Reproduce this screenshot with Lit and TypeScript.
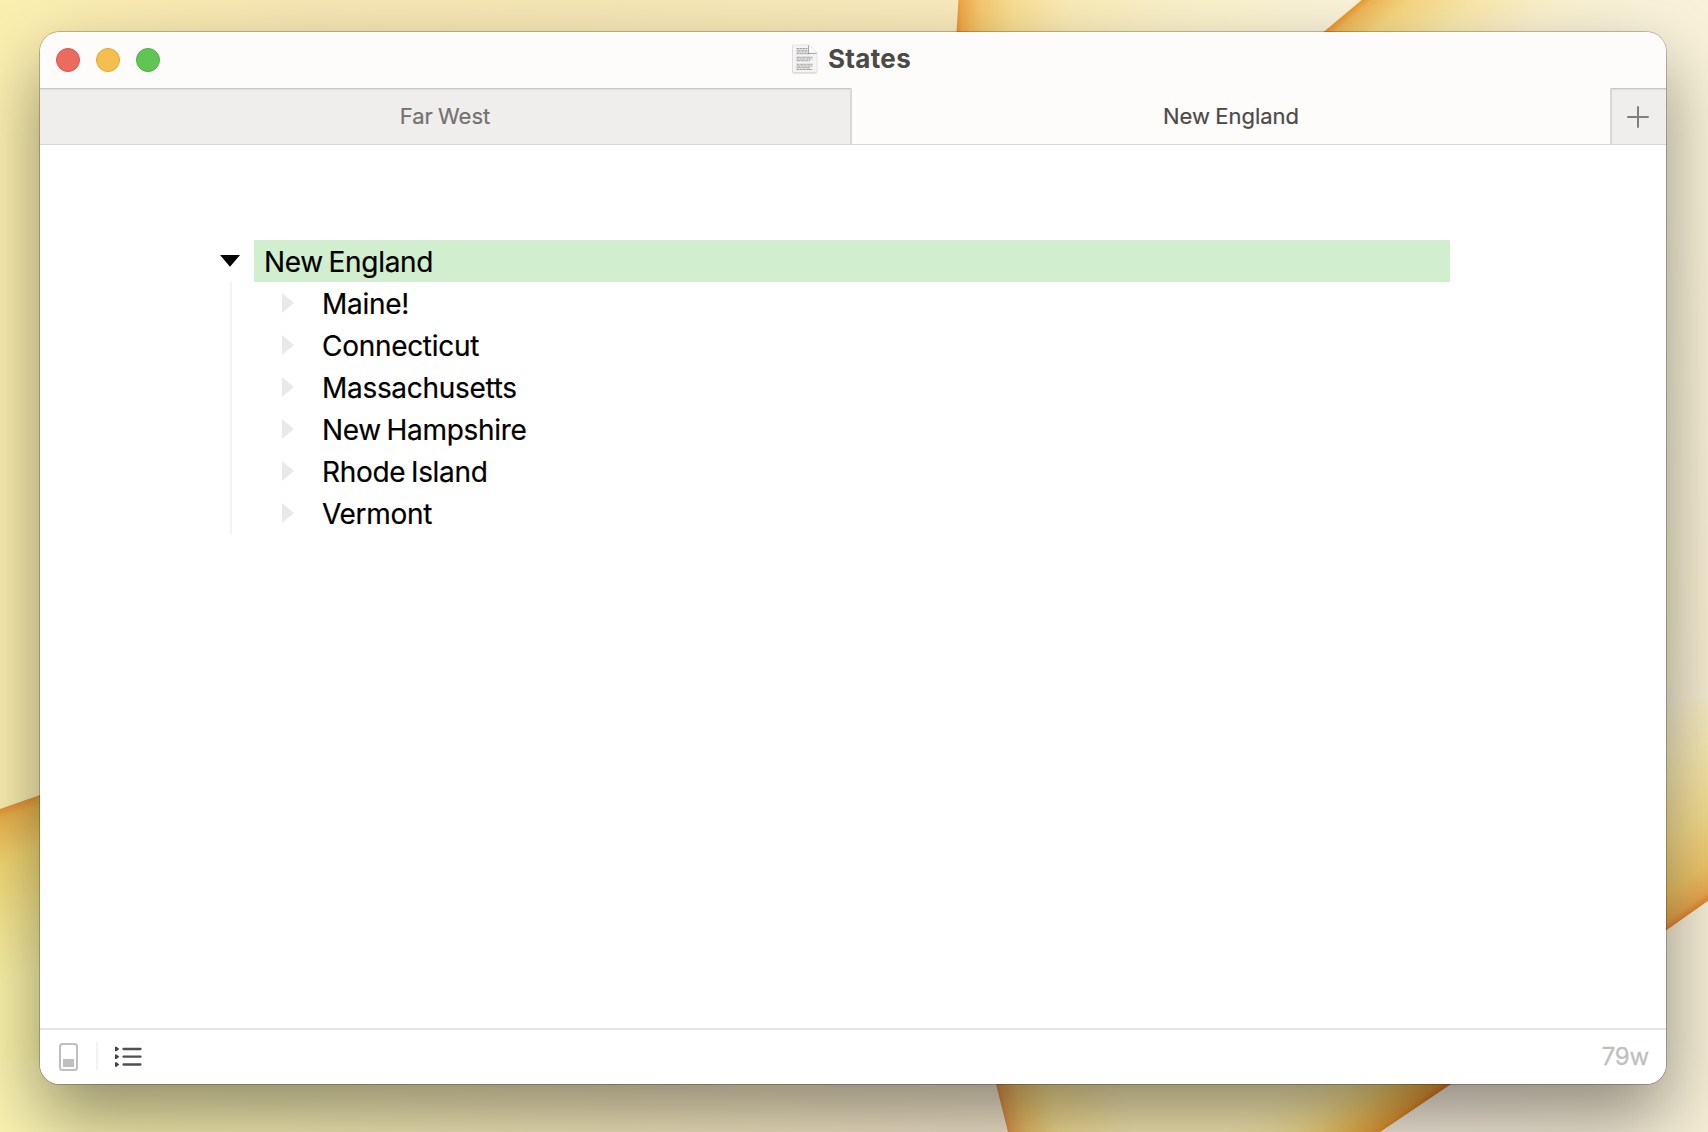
import { LitElement, html, css, svg } from "lit";
import { customElement } from "lit/decorators.js";

@customElement("desktop-wallpaper")
class DesktopWallpaper extends LitElement {
  static styles = css`
    :host { display: block; }
    svg { display: block; width: 1708px; height: 1132px; }
  `;
  render() {
    return html`<svg viewBox="0 0 1708 1132">
      <defs>
        <linearGradient id="base" gradientUnits="userSpaceOnUse" x1="0" y1="0" x2="960" y2="0">
          <stop offset="0" stop-color="#fbefb0" /><stop offset=".35" stop-color="#f7e6b5" />
          <stop offset=".7" stop-color="#f6e8b6" /><stop offset="1" stop-color="#f8eabc" />
        </linearGradient>
        <linearGradient id="topband" gradientUnits="userSpaceOnUse" x1="957" y1="0" x2="1360" y2="0">
          <stop offset="0" stop-color="#e8963c" /><stop offset=".012" stop-color="#efaa4b" />
          <stop offset=".06" stop-color="#f5c970" /><stop offset=".14" stop-color="#f8de94" />
          <stop offset=".28" stop-color="#faecb8" /><stop offset=".55" stop-color="#faf1ca" /><stop offset="1" stop-color="#faf3da" />
        </linearGradient>
        <linearGradient id="topright" gradientUnits="userSpaceOnUse" x1="1340" y1="18" x2="1462" y2="160">
          <stop offset="0" stop-color="#e8942f" /><stop offset=".04" stop-color="#efb656" />
          <stop offset=".17" stop-color="#f6d680" /><stop offset=".42" stop-color="#f9e9ae" />
          <stop offset=".7" stop-color="#faf1d0" /><stop offset="1" stop-color="#f9f2d9" />
        </linearGradient>
        <linearGradient id="side" gradientUnits="userSpaceOnUse" x1="1688" y1="915" x2="1580" y2="764">
          <stop offset="0" stop-color="#e28430" /><stop offset=".04" stop-color="#eaa84e" />
          <stop offset=".16" stop-color="#efc668" /><stop offset=".4" stop-color="#f3dc8f" />
          <stop offset=".7" stop-color="#f5e8b2" /><stop offset="1" stop-color="#f6edd0" />
        </linearGradient>
        <linearGradient id="sidefade" x1="0" y1="0" x2="0" y2="1">
          <stop offset="0" stop-color="#f9f2d9" /><stop offset="1" stop-color="#f6edd0" />
        </linearGradient>
        <linearGradient id="leaf" gradientUnits="userSpaceOnUse" x1="20" y1="802" x2="75" y2="959">
          <stop offset="0" stop-color="#e59437" /><stop offset=".06" stop-color="#eab34c" />
          <stop offset=".3" stop-color="#f2d671" /><stop offset=".65" stop-color="#f5e791" /><stop offset="1" stop-color="#f9f1a9" />
        </linearGradient>
        <linearGradient id="foot" gradientUnits="userSpaceOnUse" x1="0" y1="0" x2="1000" y2="0">
          <stop offset="0" stop-color="#f9f2b0" /><stop offset=".2" stop-color="#f7efb2" />
          <stop offset=".55" stop-color="#f5e9bc" /><stop offset="1" stop-color="#f3e6cc" />
        </linearGradient>
        <linearGradient id="footL" gradientUnits="userSpaceOnUse" x1="1002" y1="1108" x2="1122" y2="1078">
          <stop offset="0" stop-color="#e08a50" /><stop offset=".03" stop-color="#e2a050" />
          <stop offset=".15" stop-color="#ebc068" /><stop offset=".4" stop-color="#f3dd90" /><stop offset="1" stop-color="#f5e9b2" />
        </linearGradient>
        <linearGradient id="footR" gradientUnits="userSpaceOnUse" x1="1417" y1="1108" x2="1358" y2="1030">
          <stop offset="0" stop-color="#dc7a20" /><stop offset=".06" stop-color="#e39a35" />
          <stop offset=".28" stop-color="#ebbc55" stop-opacity=".9" /><stop offset=".6" stop-color="#f2d67c" stop-opacity=".5" /><stop offset="1" stop-color="#f5e198" stop-opacity="0" />
        </linearGradient>
        <linearGradient id="pale" gradientUnits="userSpaceOnUse" x1="1380" y1="0" x2="1708" y2="0">
          <stop offset="0" stop-color="#f4ebdb" /><stop offset="1" stop-color="#f6eed6" />
        </linearGradient>
      </defs>
      <rect width="1708" height="1132" fill="url(#base)" />
      <path d="M958.500 0L956 40H1314L1360 0Z" fill="url(#topband)" />
      <path d="M1362 0L1314 40L1500 500H1708V0Z" fill="url(#topright)" />
      <path d="M1600 200H1708V700H1600Z" fill="url(#sidefade)" />
      <path d="M1600 700H1708V901L1650 942Z" fill="url(#side)" />
      <path d="M1708 901L1650 942L1440 1084L1380 1132H1708Z" fill="url(#pale)" />
      <path d="M0 809L60 788V1080H0Z" fill="url(#leaf)" />
      <path d="M0 1060H1000L1008 1132H0Z" fill="url(#foot)" />
      <path d="M994 1076L1008 1132H1380L1463 1076Z" fill="url(#footL)" />
      <path d="M994 1076L1008 1132H1380L1463 1076Z" fill="url(#footR)" />
    </svg>`;
  }
}

@customElement("window-titlebar")
class WindowTitlebar extends LitElement {
  static styles = css`
    :host { display: grid; grid-template-columns: 1fr auto 1fr; height: 56px; align-items: center; background: #fdfcfa; }
    .lights { display: flex; gap: 16px; padding: 0 0 0 16px; }
    .light { width: 24px; height: 24px; border-radius: 50%; box-sizing: border-box; }
    .close { background: #ed6a5e; border: 1px solid #d8564c; }
    .min { background: #f5bf4f; border: 1px solid #dca73b; }
    .max { background: #61c554; border: 1px solid #4dae3f; }
    .title { display: flex; align-items: center; gap: 9px; padding-right: 4px; }
    .icon { display: block; width: 28px; height: 32px; margin-bottom: 2px; }
    .name { font: 700 26px/32px Inter, sans-serif; letter-spacing: .35px; color: #4a4a48; padding-bottom: 2px; }
  `;
  render() {
    const lines = [];
    for (let i = 0; i < 13; i++) {
      if (i === 4 || i === 8) continue;
      lines.push(svg`<path d="M5.500 ${5.5 + i * 1.75}H${i < 3 ? 16.5 : i % 4 === 3 ? 19 : 21.5}" stroke="#a2a2a2" stroke-width="1.100" stroke-dasharray="${3 + (i % 3)} .5 ${2 + (i % 2)} .4"/>`);
    }
    return html`
      <div class="lights"><span class="light close"></span><span class="light min"></span><span class="light max"></span></div>
      <div class="title">
        <svg class="icon" viewBox="0 0 28 32">
          <path d="M2 2.500H18L26 10.500V28.500Q26 30.500 24 30.500H3Q1 30.500 1 28.500V3.500Q1 2.500 2 2.500Z" fill="#bbb" opacity=".75" />
          <path d="M2.300 2H18L26 10V28Q26 29.500 24.500 29.500H3Q1.500 29.500 1.500 28V2.800Q1.500 2 2.300 2Z" fill="#f4f4f4" stroke="#dcdcdc" stroke-width=".7" />
          ${lines}
          <path d="M17.500 2.500V10.500H25.500" fill="none" stroke="#999" stroke-width="1" />
          <path d="M18 2L26 10H18Z" fill="#fff" stroke="#d5d5d5" stroke-width=".5" />
        </svg>
        <span class="name">States</span>
      </div>
      <div></div>`;
  }
}

@customElement("tab-strip")
class TabStrip extends LitElement {
  static styles = css`
    :host { display: flex; height: 57px; box-sizing: border-box; border-bottom: 1px solid #d5d5d4; background: #fdfcfa;
      font: 400 22px/56px Inter, sans-serif; }
    .tab, .add { box-sizing: border-box; height: 56px; text-align: center; }
    .tab { word-spacing: -1px; -webkit-text-stroke: .2px; }
    .idle { width: 812px; border-right: 2px solid #d9d8d7; color: #737271; }
    .idle, .add { background: #efeeec; box-shadow: inset 0 1px #c6c5c4, inset 0 3px 2px -1px #dddcdb; }
    .current { flex: 1; color: #4b4a49; }
    .add { width: 56px; border-left: 2px solid #d9d8d7; display: flex; align-items: center; justify-content: center; padding-right: 3px; }
    .add svg { width: 22px; height: 22px; display: block; margin-top: 1px; }
  `;
  render() {
    return html`<div class="tab idle">Far West</div>
      <div class="tab current">New England</div>
      <div class="add"><svg viewBox="0 0 22 22"><path d="M11 1V21M1 11H21" stroke="#807f7e" stroke-width="2" stroke-linecap="round" /></svg></div>`;
  }
}

@customElement("outline-tree")
class OutlineTree extends LitElement {
  static styles = css`
    :host { display: block; padding: 95px 216px 0 180px; font: 400 28px/42px Inter, sans-serif; color: #000;
      letter-spacing: -.3px; word-spacing: -2px; -webkit-text-stroke: .2px; }
    .row { display: flex; align-items: center; height: 42px; }
    .caret { width: 34px; height: 42px; flex: none; display: block; }
    .label { flex: 1; background: #d1eece; padding-left: 10px; height: 42px; line-height: 44px; }
    .kids { margin-left: 10px; border-left: 2px solid #f3f3f3; padding-left: 50px; }
    .mark { width: 12px; height: 42px; display: block; margin-right: 28px; flex: none; }
    .name { line-height: 44px; height: 42px; }
  `;
  private states = ["Maine!", "Connecticut", "Massachusetts", "New Hampshire", "Rhode Island", "Vermont"];
  render() {
    return html`<div class="row">
        <svg class="caret" viewBox="0 0 34 42"><path d="M0 15H20L10 26.800Z" /></svg>
        <div class="label">New England</div>
      </div>
      <div class="kids">${this.states.map((s) => html`<div class="row">
        <svg class="mark" viewBox="0 0 12 42"><path d="M0 11V31L12 21Z" fill="#e9e9e9" /></svg>
        <span class="name">${s}</span></div>`)}</div>`;
  }
}

@customElement("status-bar")
class StatusBar extends LitElement {
  static styles = css`
    :host { display: flex; align-items: center; box-sizing: border-box; height: 56px; border-top: 2px solid #e5e5e5; padding: 0 17px 0 19px; background: #fff; }
    svg { display: block; flex: none; }
    .panel { width: 19px; height: 28px; }
    .rule { width: 2px; height: 28px; background: #f2f2f2; margin: 0 17px 2px 18px; }
    .list { width: 27px; height: 22px; }
    .count { margin-left: auto; font: 400 24px/30px Inter, sans-serif; color: #bfbfbf; letter-spacing: -.2px; -webkit-text-stroke: .3px; }
  `;
  render() {
    return html`<svg class="panel" viewBox="0 0 19 28">
        <rect x="1" y="1" width="17" height="26" rx="2.500" fill="none" stroke="#bfbfbf" stroke-width="2" />
        <rect x="4" y="16" width="11" height="8" rx=".5" fill="#bfbfbf" /></svg>
      <span class="rule"></span>
      <svg class="list" viewBox="0 0 27 22">
        ${[3, 10.7, 18.5].map((y) => svg`<path d="M0 ${y - 2.2}H1.500L4.300 ${y}L1.500 ${y + 2.2}H0Z" fill="#444"/><path d="M8.500 ${y}H25.500" stroke="#505050" stroke-width="2.300" stroke-linecap="round"/>`)}
      </svg>
      <span class="count">79w</span>`;
  }
}

@customElement("app-root")
class AppRoot extends LitElement {
  static styles = css`
    :host { display: grid; width: 1708px; height: 1132px; overflow: hidden; }
    desktop-wallpaper, .window { grid-area: 1 / 1; }
    .window { margin: 32px 42px 48px 40px; display: flex; flex-direction: column; border-radius: 20px; overflow: hidden; background: #fff;
      z-index: 1; box-shadow: 0 0 0 1px rgba(0, 0, 0, .22), 0 33px 72px rgba(0, 0, 0, .42); }
    outline-tree { flex: 1; }
  `;
  render() {
    return html`<desktop-wallpaper></desktop-wallpaper>
      <div class="window">
        <window-titlebar></window-titlebar>
        <tab-strip></tab-strip>
        <outline-tree></outline-tree>
        <status-bar></status-bar>
      </div>`;
  }
}
